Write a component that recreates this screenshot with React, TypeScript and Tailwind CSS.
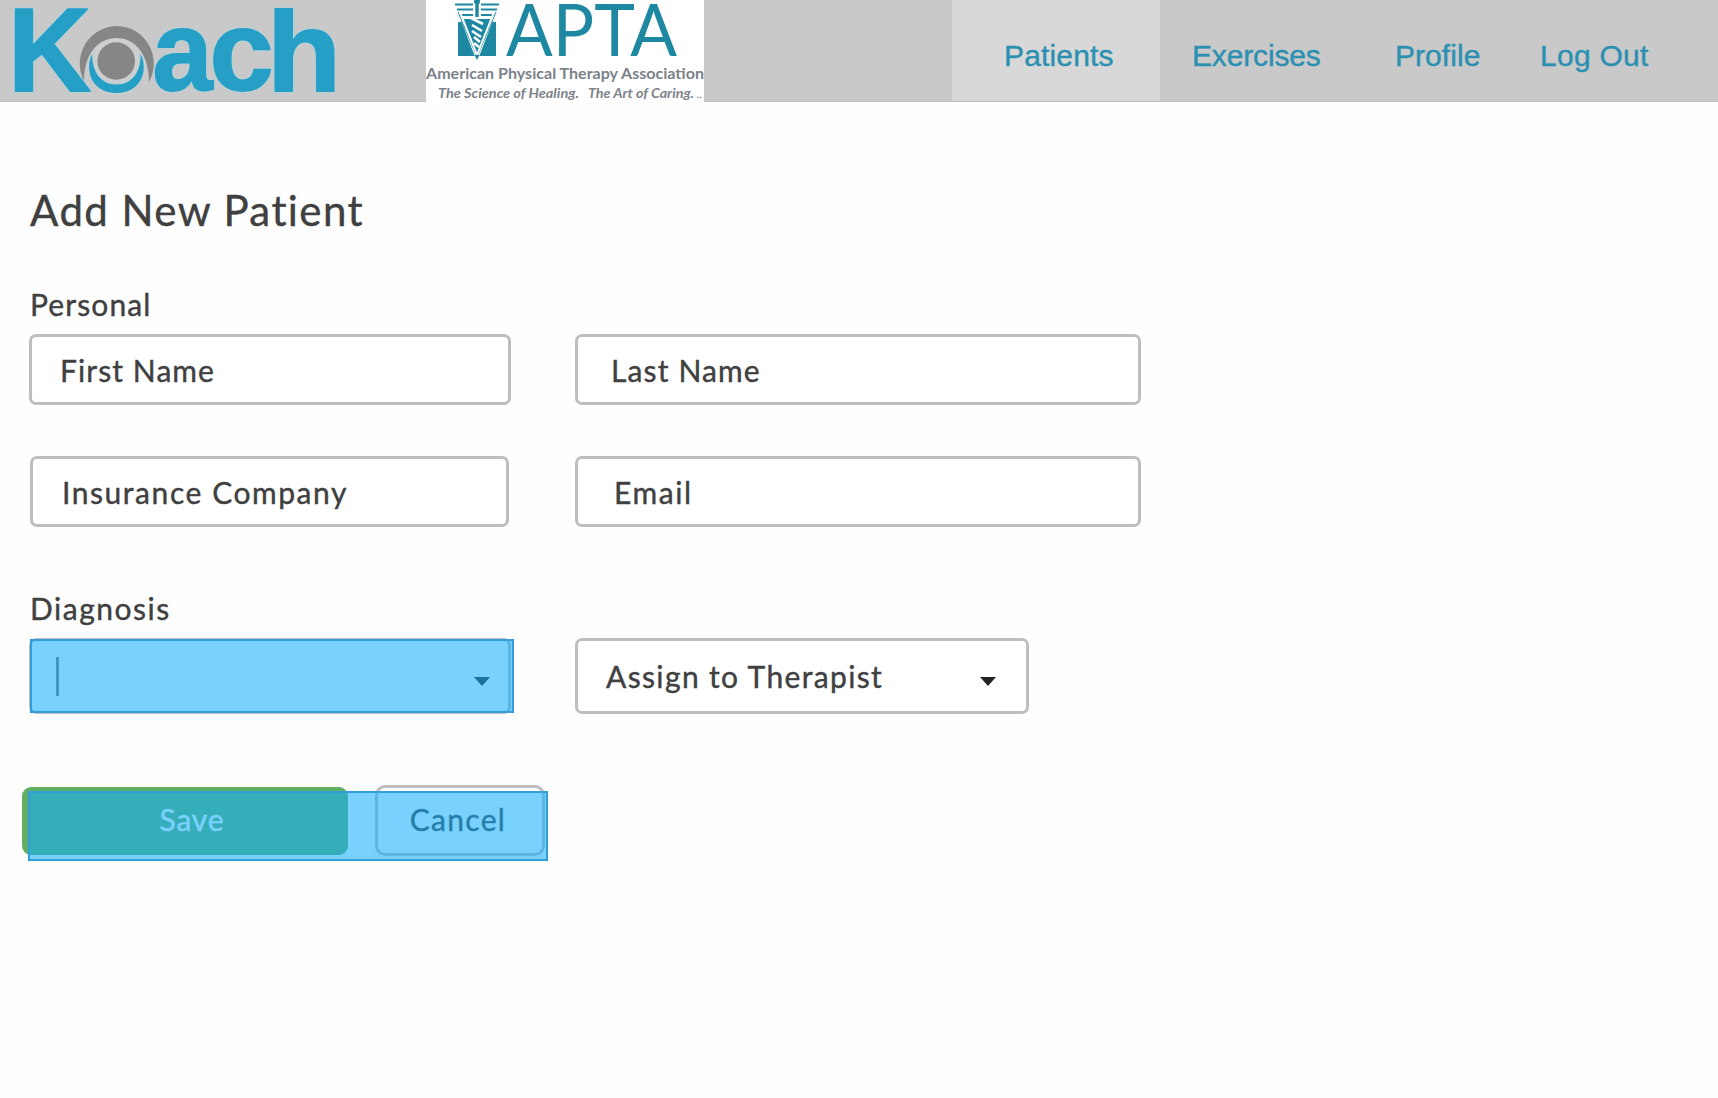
import React from "react";

function KoachLogo() {
  return (
    <svg width="350" height="101" viewBox="0 0 350 101" className="shrink-0" aria-label="Koach">
      <g
        fill="#269fc6"
        stroke="#269fc6"
        strokeWidth="1.8"
        strokeLinejoin="round"
        fontFamily="'Liberation Sans', Arial, sans-serif"
        fontWeight="700"
        className="[filter:drop-shadow(0_0_1px_#a0dcec)]"
      >
        <text x="8" y="91" fontSize="119" textLength="83" lengthAdjust="spacingAndGlyphs">K</text>
        <text x="152.5" y="90" fontSize="114" textLength="60" lengthAdjust="spacingAndGlyphs">a</text>
        <text x="209.5" y="90" fontSize="114" textLength="64" lengthAdjust="spacingAndGlyphs">c</text>
        <text x="267" y="91" fontSize="113" textLength="74" lengthAdjust="spacingAndGlyphs">h</text>
      </g>
      <circle cx="116.5" cy="66" r="29.5" fill="#cbcfd0" />
      <path d="M84 81 A37 37.5 0 1 1 149 82 C149.5 56 136 38 116.5 38 C98 38 84 54 84 81 Z" fill="#868686" />
      <path d="M92 54 C84 72 93 93 116.5 93 C140 93 149 72 140.7 54 C141 71 133 84.5 116.5 84.5 C100 84.5 92 71 92 54 Z" fill="#269fc6" stroke="#a5d0dd" strokeWidth="1" paintOrder="stroke" />
      <circle cx="116.2" cy="61" r="18.8" fill="#868686" />
    </svg>
  );
}

function AptaLogo() {
  return (
    <svg width="278" height="102" viewBox="0 0 278 102" className="shrink-0 bg-white" aria-label="APTA">
      <g>
        <rect x="32" y="22" width="38" height="34" fill="#1e88a2" />
        <path d="M28 2 L51 62 L74 2 Z" fill="#fff" />
        <path d="M29 4.5 H73 M31 9.5 H71 M34 15 H68" stroke="#1e88a2" strokeWidth="2.2" />
        <path d="M36 19 H66 L51 58 Z" fill="#1e88a2" />
        <path d="M32 12 L51 57 L70 12" fill="none" stroke="#1e88a2" strokeWidth="1" />
        <path d="M34 12 L51 55 L68 12" fill="none" stroke="#fff" strokeWidth="2" />
        <path d="M45 18 L57 24 M46 25 L56 31 M46 31 L55 37 M48 37 L54 42 M48 43 L53 47" stroke="#fff" strokeWidth="2.6" />
        <path d="M51 0 V17" stroke="#fff" strokeWidth="8" />
        <path d="M51 2 V17" stroke="#1e88a2" strokeWidth="3.4" />
        <circle cx="51" cy="1.5" r="3" fill="#1e88a2" />
        <path d="M48.5 55 L51 60 L53.5 55 Z" fill="#1e88a2" />
      </g>
      <g fontFamily="Lato, sans-serif">
        <text x="80" y="55.5" fontSize="71" fill="#1e88a2" textLength="171" lengthAdjust="spacingAndGlyphs">APTA</text>
        <text x="0" y="78.5" fontSize="16" fontWeight="700" fill="#7c8289" textLength="278" lengthAdjust="spacingAndGlyphs">American Physical Therapy Association</text>
        <g fontSize="13.5" fontWeight="700" fontStyle="italic" fill="#7c8289">
          <text x="12" y="98" textLength="141" lengthAdjust="spacingAndGlyphs">The Science of Healing.</text>
          <text x="162" y="98" textLength="106" lengthAdjust="spacingAndGlyphs">The Art of Caring.</text>
          <text x="271" y="98" fontSize="10">..</text>
        </g>
      </g>
    </svg>
  );
}

function Caret({ className }: { className: string }) {
  return (
    <svg width="16" height="9" viewBox="0 0 16 9" className={className}>
      <path d="M0 0 H16 L8 9 Z" fill="currentColor" />
    </svg>
  );
}

const fieldBase = "flex shrink-0 items-center rounded-[7px] border-[3px] border-[#bebebe] bg-white";

export default function App() {
  return (
    <div className="min-h-[1098px] w-[1718px] bg-[#fefefe] font-['Lato',sans-serif] text-[30px] leading-9 text-[#404040] [-webkit-text-stroke:0.4px_currentColor]">
      <header className="flex h-[102px] border-b border-[#bdbdbd] bg-[#c9c9c9] [-webkit-text-stroke:0]">
        <KoachLogo />
        <div className="ml-[76px] shrink-0">
          <AptaLogo />
        </div>
        <nav className="ml-[248px] flex font-['Liberation_Sans',Arial,sans-serif] text-[#2b90b1] [-webkit-text-stroke:0.4px_currentColor]">
          <a className="flex w-[208px] items-center bg-[#d8d8d8] pt-[11px] pl-[52px] tracking-[0.15px]">Patients</a>
          <a className="flex w-[203px] items-center pt-[11px] pl-[32px] tracking-[-0.15px]">Exercises</a>
          <a className="flex w-[145px] items-center pt-[11px] pl-[32px] tracking-[0.05px]">Profile</a>
          <a className="flex w-[200px] items-center pt-[11px] pl-[32px] tracking-[0.27px]">Log Out</a>
        </nav>
      </header>

      <main className="flex flex-col pt-[83px]">
        <h1 className="pl-[30px] text-[42px] leading-[50px] tracking-[1.42px]">Add New Patient</h1>

        <h2 className="mt-[51px] pl-[30px] tracking-[1.1px]">Personal</h2>
        <div className="mt-3 flex pl-[29px]">
          <div className={`${fieldBase} h-[71px] w-[482px] pl-[28px] tracking-[1.08px]`}>First Name</div>
          <div className={`${fieldBase} ml-[64px] h-[71px] w-[566px] pl-[33px] tracking-[1.13px]`}>Last Name</div>
        </div>
        <div className="mt-[51px] flex pl-[30px]">
          <div className={`${fieldBase} h-[71px] w-[479px] pl-[29px] tracking-[1.56px]`}>Insurance Company</div>
          <div className={`${fieldBase} ml-[66px] h-[71px] w-[566px] pl-[36px] tracking-[1.6px]`}>Email</div>
        </div>

        <h2 className="mt-[63px] pl-[30px] tracking-[1.5px]">Diagnosis</h2>
        <div className="mt-3 flex pl-[29px]">
          <div className="relative shrink-0">
            <div className={`${fieldBase} h-[76px] w-[482px] justify-between pr-[18px] pl-[24px]`}>
              <span className="h-[39px] w-[3px] bg-[#777777]" />
              <Caret className="mt-[10px] text-[#222222]" />
            </div>
            <div className="absolute top-[1px] left-[1px] h-[74px] w-[484px] border-2 border-[#339fd8] bg-[#13aefb]/57" />
          </div>
          <div className={`${fieldBase} ml-[64px] h-[76px] w-[454px] justify-between pr-[30px] pl-[28px] tracking-[1.36px]`}>
            <span>Assign to Therapist</span>
            <Caret className="mt-[11px] text-[#222222]" />
          </div>
        </div>

        <div className="mt-[71px] flex pl-[22px]">
          <div className="relative flex items-start">
            <button className="mt-[2px] h-[68px] w-[326px] rounded-[9px] bg-[#62ae62] pb-[4px] pl-[14px] tracking-[0.8px] text-white">
              Save
            </button>
            <button className={`${fieldBase} ml-[27px] h-[71px] w-[170px] justify-center rounded-[10px] pr-[4px] pb-[4px] tracking-[1.3px]`}>
              Cancel
            </button>
            <div className="absolute top-[6px] left-[6px] h-[70px] w-[520px] border-2 border-[#339fd8] bg-[#13aefb]/57" />
          </div>
        </div>
      </main>
    </div>
  );
}
